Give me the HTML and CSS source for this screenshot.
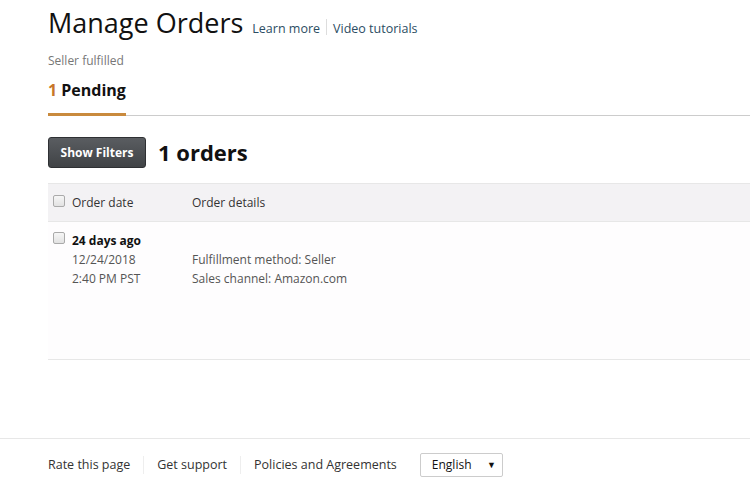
FILE: index.html
```html
<!DOCTYPE html>
<html>
<head>
<meta charset="utf-8">
<link rel="stylesheet" href="styles.css">
</head>
<body>
<div class="page">
  <div class="title-row">
    <h1 class="title">Manage Orders</h1>
    <a class="hlink">Learn more</a>
    <span class="hsep"></span>
    <a class="hlink">Video tutorials</a>
  </div>
  <div class="subtitle">Seller fulfilled</div>
  <div class="tabs">
    <div class="tab active"><span class="count">1</span> Pending</div>
  </div>
  <div class="toolbar">
    <button class="btn-dark">Show Filters</button>
    <div class="order-count">1 orders</div>
  </div>
  <div class="table">
    <div class="thead">
      <div class="cell c-check"><span class="checkbox"></span></div>
      <div class="cell c-date">Order date</div>
      <div class="cell c-details">Order details</div>
    </div>
    <div class="trow">
      <div class="cell c-check"><span class="checkbox"></span></div>
      <div class="cell c-date">
        <div class="ago">24 days ago</div>
        <div class="muted">12/24/2018</div>
        <div class="muted">2:40 PM PST</div>
      </div>
      <div class="cell c-details">
        <div class="spacer"></div>
        <div class="muted">Fulfillment method: Seller</div>
        <div class="muted">Sales channel: Amazon.com</div>
      </div>
    </div>
  </div>
</div>
<footer class="footer">
  <a class="flink">Rate this page</a>
  <span class="fsep"></span>
  <a class="flink">Get support</a>
  <span class="fsep"></span>
  <a class="flink">Policies and Agreements</a>
  <div class="select">English<span class="caret">▼</span></div>
</footer>
</body>
</html>
```

FILE: styles.css
```css
* { box-sizing: border-box; }
html, body { margin: 0; padding: 0; background: #fff; }
body {
  font-family: "Open Sans", "Liberation Sans", Arial, sans-serif;
  color: #111;
  width: 750px;
  height: 490px;
  overflow: hidden;
}
.page { padding-left: 48px; }
.title-row {
  display: flex;
  align-items: baseline;
  height: 39px;
  padding-top: 7px;
}
.title {
  margin: 0;
  font-weight: 400;
  font-size: 27px;
  line-height: 32px;
  color: #111;
  margin-right: 9px;
  letter-spacing: 0;
}
.hlink { font-size: 12.5px; color: #2c4d63; }
.hsep { width: 1px; height: 16px; background: #ddd; margin: 0 6px; align-self: center; margin-top: 8px; }
.subtitle {
  margin-top: 14px;
  font-size: 12px;
  color: #777;
  line-height: 16px;
}
.tabs {
  margin-top: 11px;
  border-bottom: 1px solid #ccc;
  display: flex;
}
.tab {
  font-size: 16px;
  font-weight: 700;
  line-height: 20px;
  padding-bottom: 13px;
  color: #111;
}
.tab.active { border-bottom: 3px solid #c98a3d; margin-bottom: -1px; }
.tab .count { color: #c7762a; }
.toolbar {
  display: flex;
  align-items: center;
  margin-top: 20px;
  height: 32px;
}
.btn-dark {
  width: 98px;
  height: 31px;
  border: 1px solid #2e3033;
  border-radius: 3px;
  background: linear-gradient(#5a5d61, #404346);
  color: #fff;
  font-family: inherit;
  font-size: 12px;
  font-weight: 700;
  padding: 0;
}
.order-count {
  margin-left: 12px;
  font-size: 22px;
  font-weight: 700;
  color: #111;
}
.table { margin-top: 15px; }
.thead {
  display: flex;
  align-items: center;
  height: 39px;
  background: #f3f2f4;
  border-top: 1px solid #e7e7e7;
  border-bottom: 1px solid #e7e7e7;
  font-size: 12px;
  color: #333;
}
.cell { font-size: 12px; }
.c-check { width: 24px; padding-left: 5px; display: flex; }
.c-date { width: 120px; }
.c-details { flex: 1; }
.checkbox {
  display: inline-block;
  width: 12px;
  height: 12px;
  border: 1px solid #aaa;
  border-radius: 2px;
  background: linear-gradient(#f6f6f6, #e2e2e2);
}
.thead .checkbox { margin-top: -4px; }
.trow {
  display: flex;
  align-items: flex-start;
  height: 138px;
  padding-top: 10px;
  background: #fefdfe;
  border-bottom: 1px solid #e7e7e7;
}
.trow .c-check { padding-top: 0; }
.ago { font-weight: 700; color: #111; line-height: 18px; }
.muted { color: #555; line-height: 19px; }
.spacer { height: 18px; }
.footer {
  margin-top: 78px;
  border-top: 1px solid #e7e7e7;
  display: flex;
  align-items: center;
  padding-left: 48px;
  height: 52px;
  padding-top: 0;
}
.flink { font-size: 12.5px; color: #333; }
.fsep { width: 1px; height: 18px; background: #eee; margin: 0 13px; }
.select {
  margin-left: 23px;
  width: 83px;
  height: 24px;
  border: 1px solid #ccc;
  border-radius: 2px;
  display: flex;
  align-items: center;
  justify-content: space-between;
  padding: 0 6px 0 11px;
  font-size: 12px;
  color: #111;
}
.caret { font-size: 9px; }
```
